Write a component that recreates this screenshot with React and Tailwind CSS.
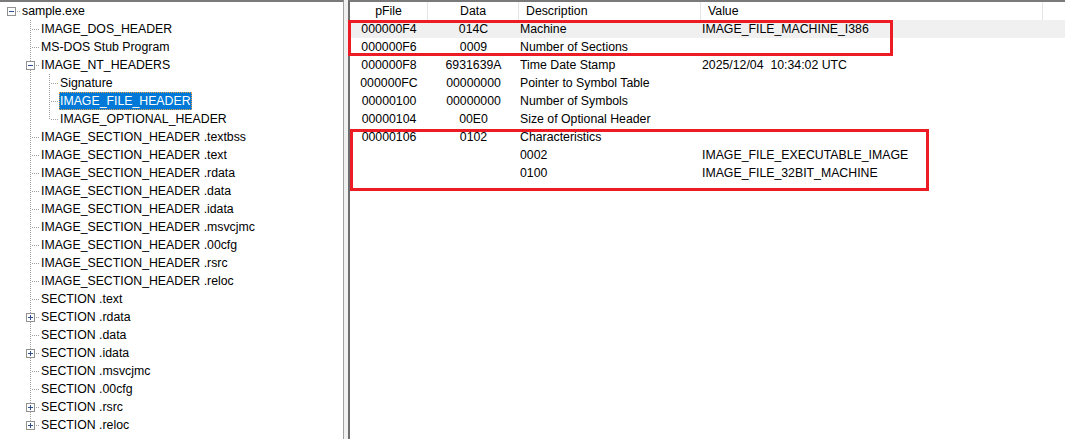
import React from 'react';

const tree = [
  {
    label: 'sample.exe',
    open: true,
    children: [
      { label: 'IMAGE_DOS_HEADER' },
      { label: 'MS-DOS Stub Program' },
      {
        label: 'IMAGE_NT_HEADERS',
        open: true,
        children: [
          { label: 'Signature' },
          { label: 'IMAGE_FILE_HEADER', selected: true },
          { label: 'IMAGE_OPTIONAL_HEADER' },
        ],
      },
      { label: 'IMAGE_SECTION_HEADER .textbss' },
      { label: 'IMAGE_SECTION_HEADER .text' },
      { label: 'IMAGE_SECTION_HEADER .rdata' },
      { label: 'IMAGE_SECTION_HEADER .data' },
      { label: 'IMAGE_SECTION_HEADER .idata' },
      { label: 'IMAGE_SECTION_HEADER .msvcjmc' },
      { label: 'IMAGE_SECTION_HEADER .00cfg' },
      { label: 'IMAGE_SECTION_HEADER .rsrc' },
      { label: 'IMAGE_SECTION_HEADER .reloc' },
      { label: 'SECTION .text' },
      { label: 'SECTION .rdata', children: [] },
      { label: 'SECTION .data' },
      { label: 'SECTION .idata', children: [] },
      { label: 'SECTION .msvcjmc' },
      { label: 'SECTION .00cfg' },
      { label: 'SECTION .rsrc', children: [] },
      { label: 'SECTION .reloc', children: [] },
    ],
  },
];

function flatten(nodes, level, guides, out) {
  nodes.forEach((n, i) => {
    const last = i === nodes.length - 1;
    out.push({ ...n, level, guides, last, first: level === 0 && i === 0 });
    if (n.open) flatten(n.children, level + 1, [...guides, !last], out);
  });
  return out;
}

const rows = [
  ['000000F4', '014C', 'Machine', 'IMAGE_FILE_MACHINE_I386'],
  ['000000F6', '0009', 'Number of Sections', ''],
  ['000000F8', '6931639A', 'Time Date Stamp', '2025/12/04  10:34:02 UTC'],
  ['000000FC', '00000000', 'Pointer to Symbol Table', ''],
  ['00000100', '00000000', 'Number of Symbols', ''],
  ['00000104', '00E0', 'Size of Optional Header', ''],
  ['00000106', '0102', 'Characteristics', ''],
  ['', '', '0002', 'IMAGE_FILE_EXECUTABLE_IMAGE'],
  ['', '', '0100', 'IMAGE_FILE_32BIT_MACHINE'],
];

function Connectors({ node }) {
  const { level, guides, last, first } = node;
  const w = 19 * (level + 1);
  const cx = 19 * level + 9.5;
  const hasKids = !!node.children;
  const dot = { stroke: '#a0a0a0', strokeWidth: 1, strokeDasharray: '1 1' };
  return (
    <svg width={w} height="18" className="shrink-0" shapeRendering="crispEdges">
      {guides.map((g, i) =>
        g ? <line key={i} x1={19 * i + 9.5} y1="0" x2={19 * i + 9.5} y2="18" {...dot} /> : null
      )}
      {!(level === 0 && first) && <line x1={cx} y1="0" x2={cx} y2="10" {...dot} />}
      {!last && <line x1={cx} y1="10" x2={cx} y2="18" {...dot} />}
      <line x1={cx + 1} y1="9.5" x2={19 * level + 19} y2="9.5" {...dot} />
      {hasKids && (
        <g>
          <rect x={19 * level + 5.5} y="5.5" width="8" height="8" fill="#fff" stroke="#919191" />
          <line x1={19 * level + 7} y1="9.5" x2={19 * level + 12} y2="9.5" stroke="#2f4f8f" />
          {!node.open && (
            <line x1={cx} y1="7" x2={cx} y2="12" stroke="#2f4f8f" />
          )}
        </g>
      )}
    </svg>
  );
}

function TreePane() {
  const items = flatten(tree, 0, [], []);
  return (
    <div className="w-[344px] shrink-0 border-t-2 border-r border-t-[#7a7a7a] border-r-[#a0a0a0] bg-white pl-[2px]">
      {items.map((n, i) => (
        <div key={i} className="flex h-[18px] items-center whitespace-nowrap">
          <Connectors node={n} />
          {n.selected ? (
            <span className="flex h-[18px] items-center bg-[#0078d7] px-[1px] text-white outline-1 outline-dotted outline-offset-[-1px] outline-[#e8a040]">
              {n.label}
            </span>
          ) : (
            <span className="px-[1px]">{n.label}</span>
          )}
        </div>
      ))}
    </div>
  );
}

function ListPane() {
  const cols = 'grid grid-cols-[78px_91px_182px_342px_1fr]';
  return (
    <div className="relative flex-1 border-t-2 border-l-2 border-t-[#7a7a7a] border-l-[#6d6d6d] bg-white">
      <div className={`${cols} h-[18px] items-stretch`}>
        <div className="flex items-center justify-center border-r border-[#e5e5e5]">pFile</div>
        <div className="flex items-center justify-center border-r border-[#e5e5e5]">Data</div>
        <div className="flex items-center border-r border-[#e5e5e5] pl-[7px]">Description</div>
        <div className="flex items-center border-r border-[#e5e5e5] pl-[7px]">Value</div>
        <div />
      </div>
      {rows.map((r, i) => (
        <div key={i} className={`${cols} h-[18px] items-center whitespace-pre ${i === 0 ? 'bg-[#f0f0f0]' : ''}`}>
          <div className="text-center">{r[0]}</div>
          <div className="text-center">{r[1]}</div>
          <div className="pl-[1px]">{r[2]}</div>
          <div className="pl-[1px]">{r[3]}</div>
          <div />
        </div>
      ))}
      <div className="absolute left-[-2px] top-[18px] h-[36px] w-[545px] border-[3px] border-[#ed1c24]" />
      <div className="absolute left-0 top-[127px] h-[62px] w-[579px] border-[3px] border-[#ed1c24]" />
    </div>
  );
}

export default function App() {
  return (
    <div className="flex h-[439px] w-[1065px] overflow-hidden bg-white font-['Liberation_Sans',Arial,sans-serif] text-[12.3px] text-black">
      <TreePane />
      <div className="w-[4px] shrink-0 bg-[#f0f0f0]" />
      <ListPane />
    </div>
  );
}
